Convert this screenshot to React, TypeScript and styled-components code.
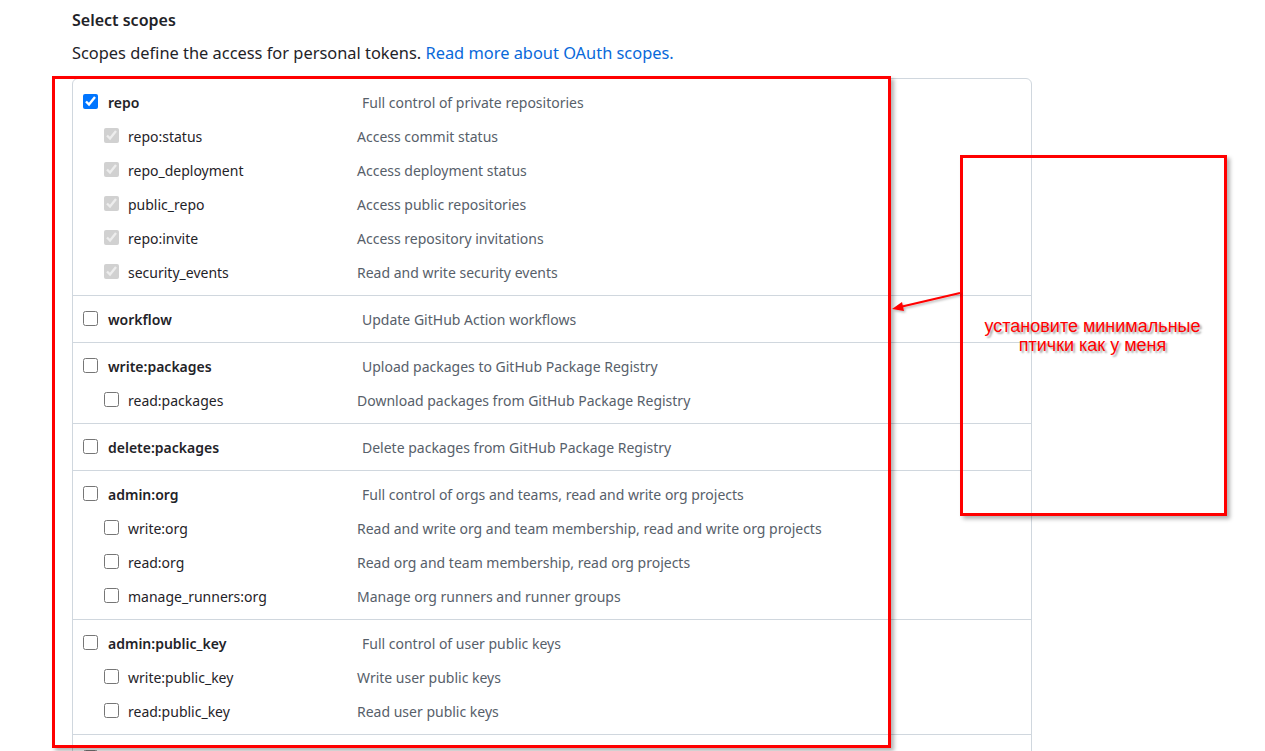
import React from "react";
import styled, { createGlobalStyle } from "styled-components";

const GlobalStyle = createGlobalStyle`
  html, body {
    margin: 0;
    padding: 0;
    background: #ffffff;
    overflow: hidden;
  }
  body {
    font-family: "Noto Sans", "Open Sans", Arial, sans-serif;
    color: #1f2328;
  }
`;

const Page = styled.div`
  position: relative;
  padding: 8px 0 0 72px;
  width: 1265px;
  height: 751px;
  box-sizing: border-box;
  overflow: hidden;
`;

const Title = styled.div`
  font-size: 16px;
  line-height: 24px;
  font-weight: 600;
  color: #1f2328;
`;

const Lead = styled.p`
  margin: 9px 0 0;
  font-size: 16.4px;
  line-height: 24px;
  color: #1f2328;
`;

const Link = styled.a`
  color: #0969da;
  text-decoration: none;
`;

const ScopeBox = styled.div`
  margin-top: 13px;
  width: 960px;
  box-sizing: border-box;
  border: 1px solid #d0d7de;
  border-radius: 6px;
`;

const Group = styled.div`
  padding: 6px 0 6px;
  & + & {
    border-top: 1px solid #d0d7de;
  }
`;

const Row = styled.label<{ $sub?: boolean }>`
  display: flex;
  align-items: center;
  height: 34px;
  padding-left: ${(p) => (p.$sub ? "31px" : "10px")};
`;

const Check = styled.input.attrs({ type: "checkbox" })`
  width: 15px;
  height: 15px;
  margin: 0 0 2px;
  flex: none;
  accent-color: #0075ff;
`;

const Name = styled.span<{ $sub?: boolean }>`
  flex: none;
  width: ${(p) => (p.$sub ? "229px" : "254px")};
  margin-left: ${(p) => (p.$sub ? "9px" : "10px")};
  font-size: 14px;
  font-weight: ${(p) => (p.$sub ? 400 : 600)};
  color: #1f2328;
`;

const Desc = styled.span`
  font-size: 14px;
  color: #57606a;
`;

const Highlight = styled.div<{ $x: number; $y: number; $w: number; $h: number }>`
  position: absolute;
  left: ${(p) => p.$x}px;
  top: ${(p) => p.$y}px;
  width: ${(p) => p.$w}px;
  height: ${(p) => p.$h}px;
  box-sizing: border-box;
  border: 3px solid #ff0000;
  box-shadow: 3px 3px 4px rgba(0, 0, 0, 0.3);
  display: flex;
  align-items: center;
  justify-content: center;
  pointer-events: none;
`;

const Note = styled.div`
  font-family: "Liberation Sans", Arial, sans-serif;
  font-size: 18px;
  line-height: 19px;
  color: #ff0000;
  text-align: center;
  text-shadow: 2px 2px 2px rgba(0, 0, 0, 0.35);
  margin: 0 0 -1px -2px;
`;

const ArrowSvg = styled.svg`
  position: absolute;
  left: 888px;
  top: 286px;
  overflow: visible;
`;

type Scope = { name: string; desc: string; checked?: boolean; disabled?: boolean };
type ScopeGroup = { main: Scope; subs: Scope[] };

const groups: ScopeGroup[] = [
  {
    main: { name: "repo", desc: "Full control of private repositories", checked: true },
    subs: [
      { name: "repo:status", desc: "Access commit status", checked: true, disabled: true },
      { name: "repo_deployment", desc: "Access deployment status", checked: true, disabled: true },
      { name: "public_repo", desc: "Access public repositories", checked: true, disabled: true },
      { name: "repo:invite", desc: "Access repository invitations", checked: true, disabled: true },
      { name: "security_events", desc: "Read and write security events", checked: true, disabled: true },
    ],
  },
  { main: { name: "workflow", desc: "Update GitHub Action workflows" }, subs: [] },
  {
    main: { name: "write:packages", desc: "Upload packages to GitHub Package Registry" },
    subs: [{ name: "read:packages", desc: "Download packages from GitHub Package Registry" }],
  },
  { main: { name: "delete:packages", desc: "Delete packages from GitHub Package Registry" }, subs: [] },
  {
    main: { name: "admin:org", desc: "Full control of orgs and teams, read and write org projects" },
    subs: [
      { name: "write:org", desc: "Read and write org and team membership, read and write org projects" },
      { name: "read:org", desc: "Read org and team membership, read org projects" },
      { name: "manage_runners:org", desc: "Manage org runners and runner groups" },
    ],
  },
  {
    main: { name: "admin:public_key", desc: "Full control of user public keys" },
    subs: [
      { name: "write:public_key", desc: "Write user public keys" },
      { name: "read:public_key", desc: "Read user public keys" },
    ],
  },
  {
    main: { name: "admin:repo_hook", desc: "Full control of repository hooks" },
    subs: [],
  },
];

function ScopeRow({ scope, sub }: { scope: Scope; sub?: boolean }) {
  return (
    <Row $sub={sub}>
      <Check defaultChecked={scope.checked} disabled={scope.disabled} />
      <Name $sub={sub}>{scope.name}</Name>
      <Desc>{scope.desc}</Desc>
    </Row>
  );
}

export default function App() {
  return (
    <>
      <GlobalStyle />
      <Page>
        <Title>Select scopes</Title>
        <Lead>
          Scopes define the access for personal tokens. <Link href="#">Read more about OAuth scopes.</Link>
        </Lead>
        <ScopeBox>
          {groups.map((g) => (
            <Group key={g.main.name}>
              <ScopeRow scope={g.main} />
              {g.subs.map((s) => (
                <ScopeRow key={s.name} scope={s} sub />
              ))}
            </Group>
          ))}
        </ScopeBox>

        <Highlight $x={52} $y={76} $w={839} $h={672} />
        <Highlight $x={960} $y={155} $w={267} $h={361}>
          <Note>
            установите минимальные
            <br />
            птички как у меня
          </Note>
        </Highlight>
        <ArrowSvg width="80" height="30" viewBox="0 0 80 30">
          <defs>
            <filter id="sh" x="-20%" y="-50%" width="140%" height="200%">
              <feDropShadow dx="1.5" dy="1.5" stdDeviation="1" floodColor="#000" floodOpacity="0.3" />
            </filter>
          </defs>
          <g filter="url(#sh)">
            <line x1="72" y1="7" x2="12" y2="21" stroke="#ff0000" strokeWidth="2" />
            <polygon points="4,23 14,16 16,25" fill="#ff0000" />
          </g>
        </ArrowSvg>
      </Page>
    </>
  );
}
